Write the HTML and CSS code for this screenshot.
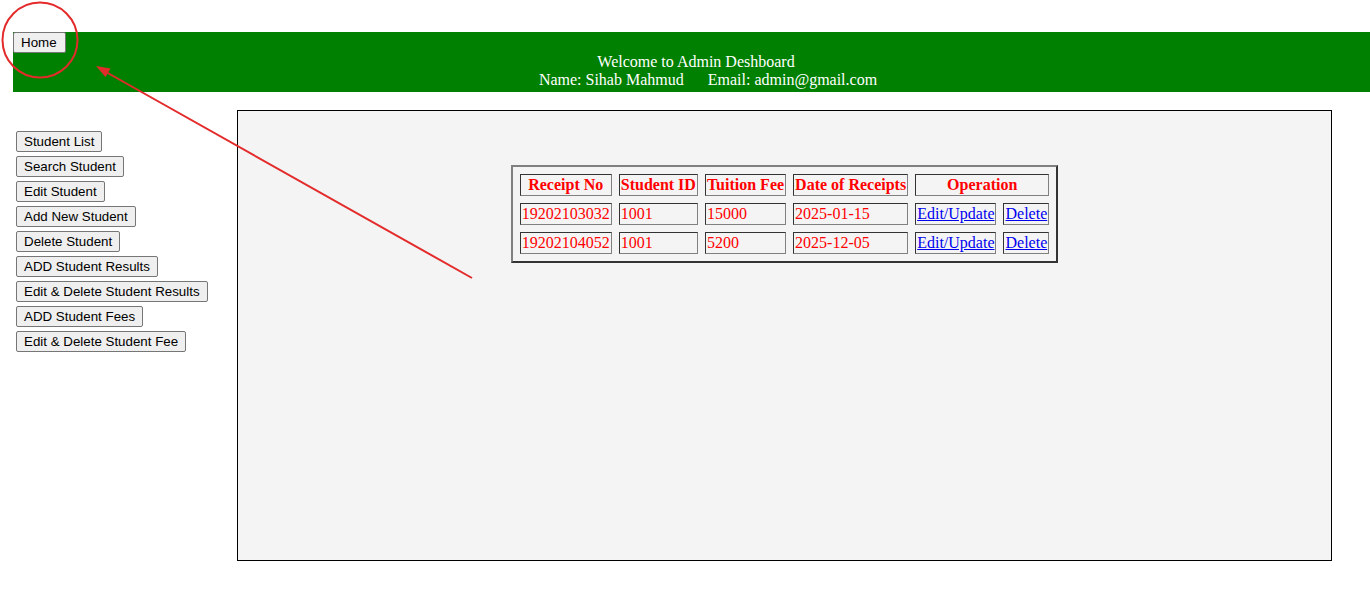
FILE: index.html
```html
<!DOCTYPE html>
<html>
<head>
<meta charset="utf-8">
<title>Admin Deshboard</title>
<link rel="stylesheet" href="styles.css">
</head>
<body>
<div class="header">
  <button class="btn home">Home</button>
  <div class="welcome">
    <div>Welcome to Admin Deshboard</div>
    <div>&nbsp;&nbsp;&nbsp;&nbsp;&nbsp;&nbsp;Name: Sihab Mahmud&nbsp;&nbsp;&nbsp;&nbsp;&nbsp;&nbsp;Email: admin@gmail.com</div>
  </div>
</div>
<div class="content">
  <div class="sidebar">
    <button class="btn">Student List</button>
    <button class="btn">Search Student</button>
    <button class="btn">Edit Student</button>
    <button class="btn">Add New Student</button>
    <button class="btn">Delete Student</button>
    <button class="btn">ADD Student Results</button>
    <button class="btn">Edit &amp; Delete Student Results</button>
    <button class="btn">ADD Student Fees</button>
    <button class="btn">Edit &amp; Delete Student Fee</button>
  </div>
  <div class="main">
    <table class="fees">
      <tr>
        <th>Receipt No</th>
        <th>Student ID</th>
        <th>Tuition Fee</th>
        <th>Date of Receipts</th>
        <th colspan="2">Operation</th>
      </tr>
      <tr>
        <td>19202103032</td>
        <td>1001</td>
        <td>15000</td>
        <td>2025-01-15</td>
        <td><a href="#">Edit/Update</a></td>
        <td><a href="#">Delete</a></td>
      </tr>
      <tr>
        <td>19202104052</td>
        <td>1001</td>
        <td>5200</td>
        <td>2025-12-05</td>
        <td><a href="#">Edit/Update</a></td>
        <td><a href="#">Delete</a></td>
      </tr>
    </table>
  </div>
</div>
<svg class="annotation" width="1370" height="611" viewBox="0 0 1370 611">
  <circle cx="40" cy="40" r="37.5" fill="none" stroke="#e32b2b" stroke-width="2"/>
  <line x1="472" y1="278" x2="106" y2="72" stroke="#e32b2b" stroke-width="2"/>
  <polygon points="96,66 105.5,77 110.5,68.5" fill="#e32b2b"/>
</svg>
</body>
</html>
```
FILE: styles.css
```css
html, body {
  margin: 0;
  padding: 0;
  background: #ffffff;
}

body {
  font-family: "Liberation Serif", "Times New Roman", serif;
  font-size: 16px;
  color: #000;
  position: relative;
  width: 1370px;
  height: 611px;
  overflow: hidden;
}

.btn {
  font-family: "Liberation Sans", Arial, sans-serif;
  font-size: 13.333px;
  line-height: 15px;
  color: #000;
  background: #efefef;
  border: 1px solid #767676;
  border-radius: 2px;
  padding: 2px 7px;
  margin: 0;
  height: 21px;
  box-sizing: border-box;
  white-space: nowrap;
  cursor: pointer;
}

.home {
  padding: 2px 8px 2px 7px;
}

.header {
  margin: 32px 0 0 13px;
  height: 60px;
  background: #008000;
  display: flex;
  flex-direction: column;
  align-items: flex-start;
}

.welcome {
  align-self: stretch;
  color: #ffffff;
  text-align: center;
  line-height: 18px;
  padding-left: 9px;
  white-space: nowrap;
}

.content {
  display: flex;
  margin-top: 18px;
}

.sidebar {
  width: 237px;
  box-sizing: border-box;
  padding: 21px 0 0 16px;
  display: flex;
  flex-direction: column;
  align-items: flex-start;
  gap: 4px;
}

.main {
  width: 1095px;
  height: 451px;
  box-sizing: border-box;
  border: 1px solid #000;
  background: #f4f4f4;
  padding-top: 54px;
}

.fees {
  margin: 0 auto;
  border-collapse: separate;
  border-spacing: 7px;
  border-width: 2px;
  border-style: solid;
  border-color: #808080 #333333 #333333 #808080;
}

.fees th,
.fees td {
  border-width: 1px;
  border-style: solid;
  border-color: #333333 #808080 #808080 #333333;
  padding: 1px;
  color: #ff0000;
  line-height: 18px;
  white-space: nowrap;
}

.fees th {
  font-weight: bold;
  text-align: center;
}

.fees td {
  text-align: left;
}

.fees a {
  color: #0000ee;
  text-decoration: underline;
}

.annotation {
  position: absolute;
  left: 0;
  top: 0;
  pointer-events: none;
}
```
